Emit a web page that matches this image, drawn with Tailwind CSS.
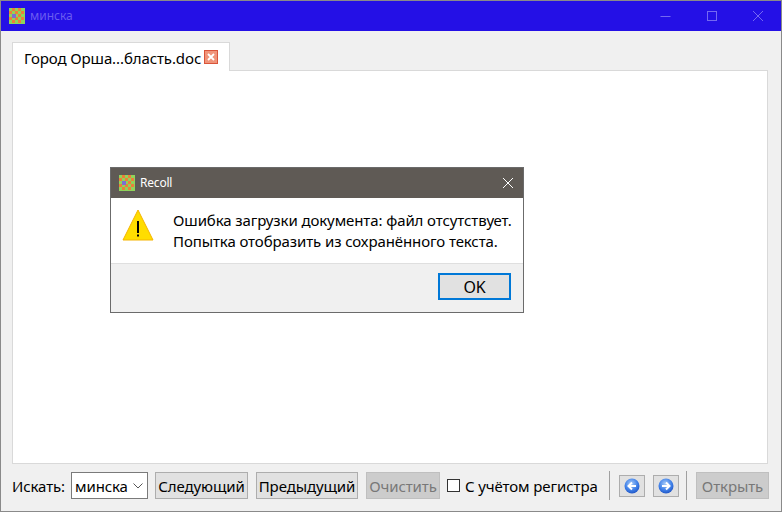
<!DOCTYPE html>
<html><head><meta charset="utf-8"><script src="https://cdn.jsdelivr.net/npm/@tailwindcss/browser@4"></script></head>
<body class="m-0 bg-[#8a8a8a]">
<div class="relative w-[782px] h-[512px] overflow-hidden font-['Noto_Sans',sans-serif] text-[15px] tracking-[-0.1px] text-black">
  <div class="mx-px mt-px w-[780px] h-[510px] bg-[#f0f0f0] flex flex-col">
    <div class="h-[30px] bg-[#2410e6] flex items-center shrink-0">
      <svg class="ml-2 w-4 h-4" viewBox="0 0 16 16" shape-rendering="crispEdges"><rect width="16" height="16" fill="#8fd35a"/><path fill="#ee7d3a" d="M3 0h3v3H3zM9 0h3v3H9zM0 3h3v3H0zM6 3h3v3H6zM12 3h3v3h-3zM3 6h3v3H3zM9 6h3v3H9zM0 9h3v3H0zM6 9h3v3H6zM12 9h3v3h-3zM3 12h3v3H3zM9 12h3v3H9z"/><rect x="3" y="6" width="4" height="4" fill="#7d6fd0"/></svg>
      <span class="ml-[5px] text-[12px] tracking-normal text-[#6a5cf0]">минска</span>
      <div class="ml-auto flex items-center">
        <svg class="w-[46px] h-[30px]" viewBox="0 0 46 30"><path d="M17.5 15.5h10" stroke="#7468f2" fill="none"/></svg>
        <svg class="w-[46px] h-[30px]" viewBox="0 0 46 30"><rect x="18.5" y="10.5" width="9" height="9" stroke="#7468f2" fill="none"/></svg>
        <svg class="w-[46px] h-[30px]" viewBox="0 0 46 30"><path d="M18 10l10 10M28 10L18 20" stroke="#7468f2" fill="none"/></svg>
      </div>
    </div>
    <div class="flex-1 flex flex-col pl-[11px] pr-[13px] pt-[11px] min-h-0">
      <div class="relative z-10 -mb-px w-[218px] h-[29px] bg-white border border-b-0 border-[#d9d9d9] flex items-center pl-[11px] shrink-0 whitespace-nowrap">
        <span class="leading-none pt-[2px]">Город Орша...бласть.doc</span>
        <svg class="ml-[3px] w-[14px] h-[14px]" viewBox="0 0 14 14"><rect x=".5" y=".5" width="13" height="13" fill="#f0947a" stroke="#d9543a"/><path d="M4 4l6 6M10 4l-6 6" stroke="#fff" stroke-width="1.8"/></svg>
      </div>
      <div class="flex-1 bg-white border border-[#d9d9d9]"></div>
      <div class="h-[47px] -mr-px shrink-0 flex items-center pb-[4px] whitespace-nowrap">
        <span class="w-[54px] shrink-0 pt-[2px]">Искать:</span>
        <div class="ml-[5px] w-[77px] h-[27px] bg-white border border-[#7a7a7a] flex items-center pl-[3px] shrink-0">
          <span class="pt-[2px]">минска</span>
          <svg class="ml-auto mr-[4px] w-[10px] h-[6px]" viewBox="0 0 10 6"><path d="M.5.5L5 5 9.5.5" stroke="#555" fill="none"/></svg>
        </div>
        <button class="ml-[7px] w-[93px] h-[27px] pt-[2px] bg-[#e1e1e1] border border-[#adadad] flex items-center justify-center shrink-0">Следующий</button>
        <button class="ml-2 w-[102px] h-[27px] pt-[2px] bg-[#e1e1e1] border border-[#adadad] flex items-center justify-center shrink-0">Предыдущий</button>
        <button class="ml-2 w-[74px] h-[27px] pt-[2px] bg-[#cccccc] border border-[#bfbfbf] flex items-center justify-center text-[#787878] shrink-0">Очистить</button>
        <span class="ml-[7px] w-[13px] h-[13px] bg-white border border-[#333] shrink-0"></span>
        <span class="ml-[5px] w-[144px] shrink-0 pt-[2px]">С учётом регистра</span>
        <span class="w-px h-[29px] bg-[#a0a0a0] shrink-0"></span>
        <button class="ml-[9px] w-[26px] h-[22px] bg-[#e1e1e1] border border-[#adadad] flex items-center justify-center shrink-0"><svg class="w-4 h-4" viewBox="0 0 16 16"><defs><radialGradient id="a" cx=".45" cy=".35" r=".7"><stop offset="0" stop-color="#a8ccf8"/><stop offset=".6" stop-color="#3f80e8"/><stop offset="1" stop-color="#1c4fc0"/></radialGradient></defs><circle cx="8" cy="8" r="7.5" fill="url(#a)"/><path d="M12 8H5M8 4.5L4.5 8 8 11.5" stroke="#fff" stroke-width="2" fill="none"/></svg></button>
        <button class="ml-2 w-[26px] h-[22px] bg-[#e1e1e1] border border-[#adadad] flex items-center justify-center shrink-0"><svg class="w-4 h-4" viewBox="0 0 16 16"><defs><radialGradient id="b" cx=".45" cy=".35" r=".7"><stop offset="0" stop-color="#a8ccf8"/><stop offset=".6" stop-color="#3f80e8"/><stop offset="1" stop-color="#1c4fc0"/></radialGradient></defs><circle cx="8" cy="8" r="7.5" fill="url(#b)"/><path d="M4 8h7M8 4.5L11.5 8 8 11.5" stroke="#fff" stroke-width="2" fill="none"/></svg></button>
        <span class="ml-[7px] w-px h-[29px] bg-[#a0a0a0] shrink-0"></span>
        <button class="ml-[9px] w-[73px] h-[27px] pt-[2px] bg-[#cccccc] border border-[#bfbfbf] flex items-center justify-center text-[#787878] shrink-0">Открыть</button>
      </div>
    </div>
  </div>
  <div class="absolute left-[110px] top-[167px] w-[414px] h-[146px] border border-[#6b6b6b] bg-[#f0f0f0] flex flex-col">
    <div class="h-[30px] bg-[#5f5a55] flex items-center shrink-0 text-white">
      <svg class="ml-2 w-4 h-4" viewBox="0 0 16 16" shape-rendering="crispEdges"><rect width="16" height="16" fill="#8fd35a"/><path fill="#ee7d3a" d="M3 0h3v3H3zM9 0h3v3H9zM0 3h3v3H0zM6 3h3v3H6zM12 3h3v3h-3zM3 6h3v3H3zM9 6h3v3H9zM0 9h3v3H0zM6 9h3v3H6zM12 9h3v3h-3zM3 12h3v3H3zM9 12h3v3H9z"/><rect x="3" y="6" width="4" height="4" fill="#7d6fd0"/></svg>
      <span class="ml-[5px] text-[12px] tracking-[-0.2px]">Recoll</span>
      <svg class="ml-auto mr-[10px] w-[10px] h-[10px]" viewBox="0 0 10 10"><path d="M0 0l10 10M10 0L0 10" stroke="#fff" fill="none"/></svg>
    </div>
    <div class="h-[66px] bg-white border-b border-[#dfdfdf] flex items-start shrink-0">
      <svg class="ml-[11px] mt-[11px] w-8 h-8" viewBox="0 0 32 32"><path d="M16 1L31 31H1z" fill="#ffdd00" stroke="#f5b400" stroke-linejoin="round"/><rect x="15" y="12" width="2" height="12" fill="#000"/><rect x="15" y="25.5" width="2" height="2" fill="#000"/></svg>
      <div class="ml-[19px] mt-[12px] leading-[21px] whitespace-nowrap">Ошибка загрузки документа: файл отсутствует.<br>Попытка отобразить из сохранённого текста.</div>
    </div>
    <div class="flex-1 flex justify-end items-center pr-3 pb-[3px]">
      <button class="w-[73px] h-[27px] bg-[#e1e1e1] border-2 border-[#0078d7] flex items-center justify-center text-[16px]">OK</button>
    </div>
  </div>
</div>
</body></html>
